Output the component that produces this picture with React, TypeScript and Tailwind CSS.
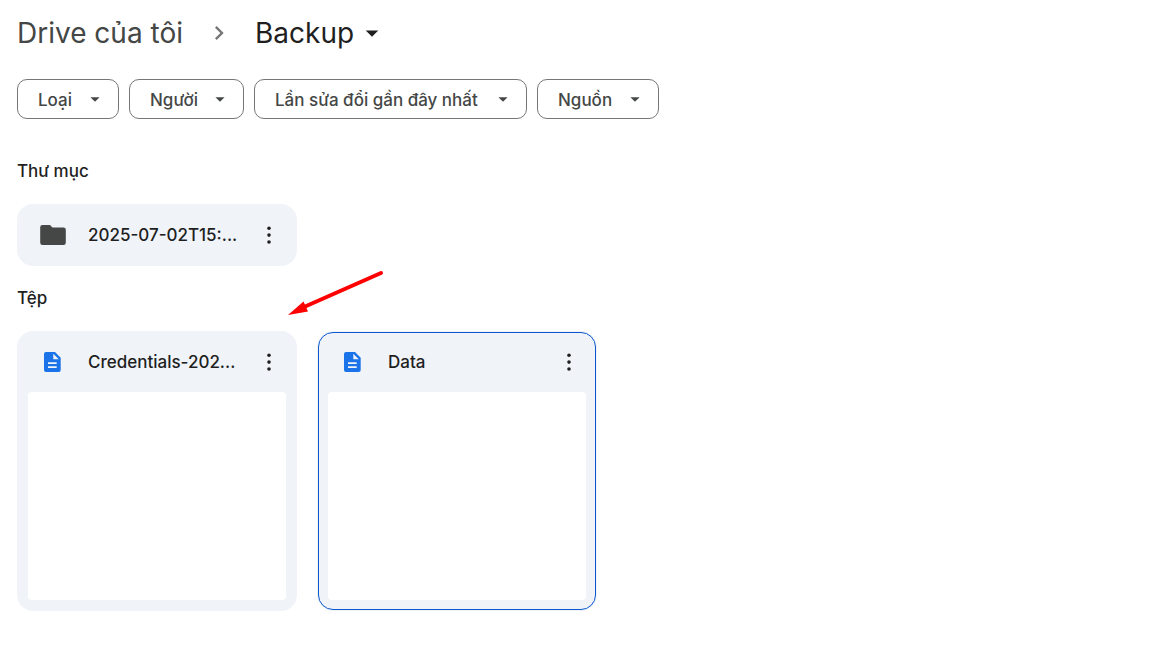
import type { ReactNode } from 'react'

interface IconProps {
  className?: string
}

function CaretIcon({ className }: IconProps) {
  return (
    <svg viewBox="0 0 24 24" fill="currentColor" className={className} aria-hidden="true">
      <path d="M7 10l5 5 5-5z" />
    </svg>
  )
}

function ChevronIcon({ className }: IconProps) {
  return (
    <svg viewBox="0 0 24 24" fill="currentColor" className={className} aria-hidden="true">
      <path d="M10 6L8.59 7.41 13.17 12l-4.58 4.59L10 18l6-6z" />
    </svg>
  )
}

function FolderIcon() {
  return (
    <svg viewBox="0 0 26 20" fill="currentColor" className="h-5 w-[26px] text-[#444746]" aria-hidden="true">
      <path d="M2.5 0H10l2.5 2.4h11a2.300 2.300 0 0 1 2.300 2.300v13a2.300 2.300 0 0 1-2.300 2.300h-21A2.300 2.300 0 0 1 .2 17.700V2.300A2.300 2.300 0 0 1 2.500 0z" />
    </svg>
  )
}

function DocIcon() {
  return (
    <svg viewBox="0 0 17 20" className="h-5 w-[17px]" aria-hidden="true">
      <path
        fill="#1a73e8"
        fillRule="evenodd"
        d="M2 0h9l5.700 5.700V18a2 2 0 0 1-2 2H2a2 2 0 0 1-2-2V2a2 2 0 0 1 2-2zM9.300 1.700V7.200h5.500zM4 10.200v1.700h8.700v-1.700zM4 14.200v1.700h8.700v-1.700z"
      />
    </svg>
  )
}

function MoreIcon() {
  return (
    <svg viewBox="0 0 4 18" fill="currentColor" className="h-[18px] w-1" aria-hidden="true">
      <circle cx="2" cy="2.200" r="1.800" />
      <circle cx="2" cy="9.100" r="1.800" />
      <circle cx="2" cy="16" r="1.800" />
    </svg>
  )
}

const filters = [
  { label: 'Loại', width: 'w-[102px]' },
  { label: 'Người', width: 'w-[115px]' },
  { label: 'Lần sửa đổi gần đây nhất', width: 'w-[273px]' },
  { label: 'Nguồn', width: 'w-[122px]' },
]

const files = [
  { name: 'Credentials-202...', selected: false },
  { name: 'Data', selected: true },
]

function ItemHeader({ icon, name }: { icon: ReactNode; name: string }) {
  return (
    <div className="flex h-full items-center">
      <span className="flex w-[71px] shrink-0 justify-center">{icon}</span>
      <span className="text-[17px] leading-6 font-medium whitespace-nowrap">{name}</span>
      <button type="button" aria-label="Thao tác khác" className="ml-auto mr-4 flex h-8 w-6 items-center justify-center">
        <MoreIcon />
      </button>
    </div>
  )
}

export default function App() {
  return (
    <main className="px-[17px] pt-3 pb-12 font-[Inter,'Noto_Sans',sans-serif] text-[#1f1f1f]">
      <nav className="flex h-[42px] items-center text-[28px] leading-9">
        <a href="#" className="text-[#444746]">Drive của tôi</a>
        <ChevronIcon className="mx-[22px] size-7 text-[#747775]" />
        <button type="button" className="flex items-center gap-[3px]">
          Backup
          <CaretIcon className="size-[30px]" />
        </button>
      </nav>

      <div className="mt-[25px] flex flex-wrap gap-2.5">
        {filters.map((filter) => (
          <button
            key={filter.label}
            type="button"
            className={`flex h-10 items-center justify-between rounded-[10px] border border-[#747775] pl-5 pr-3 text-[17px] font-medium whitespace-nowrap text-[#444746] ${filter.width}`}
          >
            <span className="pt-0.5 leading-6">{filter.label}</span>
            <CaretIcon className="size-[22px]" />
          </button>
        ))}
      </div>

      <section>
        <h2 className="mt-10 text-[17px] leading-6 font-medium">Thư mục</h2>
        <div className="mt-[21px] grid grid-cols-[repeat(auto-fill,280px)] gap-5">
          <div className="h-[62px] rounded-2xl bg-[#f0f4f9]">
            <ItemHeader icon={<FolderIcon />} name="2025-07-02T15:..." />
          </div>
        </div>
      </section>

      <section>
        <h2 className="mt-5 text-[17px] leading-6 font-medium">Tệp</h2>
        <div className="mt-[21px] grid grid-cols-[repeat(auto-fill,280px)] gap-5">
          {files.map((file) => (
            <div
              key={file.name}
              className={`rounded-2xl bg-[#f0f4f9] pb-[11px] ${file.selected ? 'outline-1 -outline-offset-2 outline-[#0b57d0]' : ''}`}
            >
              <div className="h-[61px]">
                <ItemHeader icon={<DocIcon />} name={file.name} />
              </div>
              <div className="mx-[11px] h-52 rounded bg-white" />
            </div>
          ))}
        </div>
      </section>

      <svg viewBox="0 0 96 46" className="absolute top-[270px] left-[288px] h-[46px] w-24" aria-hidden="true">
        <path d="M93 3L16 37" stroke="#ff0000" strokeWidth="4" strokeLinecap="round" />
        <path d="M0 45L15.500 31.500 20 41.500z" fill="#ff0000" />
      </svg>
    </main>
  )
}
